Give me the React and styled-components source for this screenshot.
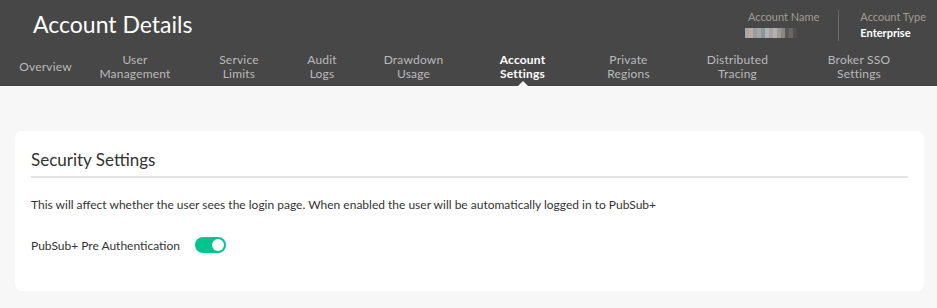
import React from 'react'
import styled, { createGlobalStyle } from 'styled-components'

const Global = createGlobalStyle`
  body {
    margin: 0;
    background: #f7f7f7;
    font-family: Lato, 'Noto Sans', sans-serif;
  }
`

const Header = styled.header`
  background: #474747;
  height: 86px;
  display: flex;
  flex-direction: column;
`

const TopRow = styled.div`
  display: flex;
  justify-content: space-between;
  align-items: flex-start;
  padding: 8px 11px 0 33px;
`

const Title = styled.h1`
  margin: 2px 0 0;
  color: #fff;
  font-size: 23px;
  font-weight: 400;
  line-height: 28px;
`

const Meta = styled.div`
  display: flex;
  align-items: stretch;
  margin-top: 2px;
`

const MetaItem = styled.div`
  display: flex;
  flex-direction: column;
  padding: 0 ${({ $pad }) => $pad || '0'};
  border-left: ${({ $divider }) => ($divider ? '1px solid #6b6b6b' : 'none')};
`

const MetaLabel = styled.span`
  color: #a09d96;
  font-size: 11px;
  line-height: 14px;
`

const MetaValue = styled.span`
  color: #fff;
  font-size: 11px;
  font-weight: 700;
  line-height: 16px;
  margin-top: 1px;
`

const Blur = styled.div`
  display: flex;
  height: 10px;
  margin: 4px 0 2px -3px;
`

const BlurCell = styled.span`
  width: 4px;
  height: 100%;
  background: ${({ $c }) => $c};
`

const Tabs = styled.nav`
  display: flex;
  align-items: stretch;
  margin-top: auto;
  height: 38px;
  padding-left: 21px;
`

const Tab = styled.div`
  position: relative;
  display: flex;
  align-items: center;
  justify-content: center;
  text-align: center;
  white-space: nowrap;
  width: ${({ $w }) => $w}px;
  margin-left: ${({ $gap }) => $gap}px;
  font-size: 12px;
  line-height: 14px;
  color: ${({ $active }) => ($active ? '#fff' : '#bababa')};
  font-weight: ${({ $active }) => ($active ? 700 : 400)};
  letter-spacing: 0.2px;

  &::after {
    content: '';
    display: ${({ $active }) => ($active ? 'block' : 'none')};
    position: absolute;
    bottom: 0;
    left: 50%;
    transform: translateX(-50%);
    border-left: 5px solid transparent;
    border-right: 5px solid transparent;
    border-bottom: 5px solid #f7f7f7;
  }
`

const Main = styled.main`
  padding: 45px 13px 18px 15px;
`

const Card = styled.section`
  background: #fff;
  border-radius: 7px;
  padding: 19px 16px 38px;
`

const CardTitle = styled.h2`
  margin: 0;
  font-size: 17px;
  font-weight: 400;
  color: #333;
  line-height: 20px;
  padding-bottom: 6px;
  border-bottom: 2px solid #e3e3e3;
`

const Text = styled.p`
  margin: 19px 0 0;
  font-size: 12px;
  color: #333;
  line-height: 16px;
`

const Row = styled.div`
  display: flex;
  align-items: center;
  margin-top: 24px;
`

const Label = styled.span`
  font-size: 12px;
  color: #333;
  width: 164px;
`

const Switch = styled.div`
  width: 31px;
  height: 16px;
  border-radius: 8px;
  background: ${({ $on }) => ($on ? '#00c58f' : '#ccc')};
  display: flex;
  align-items: center;
  justify-content: ${({ $on }) => ($on ? 'flex-end' : 'flex-start')};
  padding: 0 2px;
  box-sizing: border-box;

  &::before {
    content: '';
    width: 12px;
    height: 12px;
    border-radius: 50%;
    background: #fff;
  }
`

const tabs = [
  { label: ['Overview'], w: 49, gap: 0 },
  { label: ['User', 'Management'], w: 70, gap: 30 },
  { label: ['Service', 'Limits'], w: 40, gap: 49 },
  { label: ['Audit', 'Logs'], w: 28, gap: 49 },
  { label: ['Drawdown', 'Usage'], w: 57, gap: 49 },
  { label: ['Account', 'Settings'], w: 45, gap: 58, active: true },
  { label: ['Private', 'Regions'], w: 43, gap: 62 },
  { label: ['Distributed', 'Tracing'], w: 61, gap: 57 },
  { label: ['Broker SSO', 'Settings'], w: 60, gap: 61 },
]

const blur = ['#a7a7a7', '#b9aca2', '#9a9ca2', '#a6a6a8', '#8d959b', '#b3b3b6', '#a2a2a5', '#b6b1ac', '#9a9a9a', '#8a8683', '#5a5856', '#6a6866', '#4f4f4f']

export default function App() {
  return (
    <>
      <Global />
      <Header>
        <TopRow>
          <Title>Account Details</Title>
          <Meta>
            <MetaItem $pad="19px">
              <MetaLabel>Account Name</MetaLabel>
              <Blur>
                {blur.map((c, i) => (
                  <BlurCell key={i} $c={c} />
                ))}
              </Blur>
            </MetaItem>
            <MetaItem $divider $pad="21px" style={{ paddingRight: 0 }}>
              <MetaLabel>Account Type</MetaLabel>
              <MetaValue>Enterprise</MetaValue>
            </MetaItem>
          </Meta>
        </TopRow>
        <Tabs>
          {tabs.map((t) => (
            <Tab key={t.label.join(' ')} $active={t.active} $w={t.w} $gap={t.gap}>
              <div>
                {t.label.map((l) => (
                  <div key={l}>{l}</div>
                ))}
              </div>
            </Tab>
          ))}
        </Tabs>
      </Header>
      <Main>
        <Card>
          <CardTitle>Security Settings</CardTitle>
          <Text>
            This will affect whether the user sees the login page. When enabled the user will be automatically logged in
            to PubSub+
          </Text>
          <Row>
            <Label>PubSub+ Pre Authentication</Label>
            <Switch $on />
          </Row>
        </Card>
      </Main>
    </>
  )
}
